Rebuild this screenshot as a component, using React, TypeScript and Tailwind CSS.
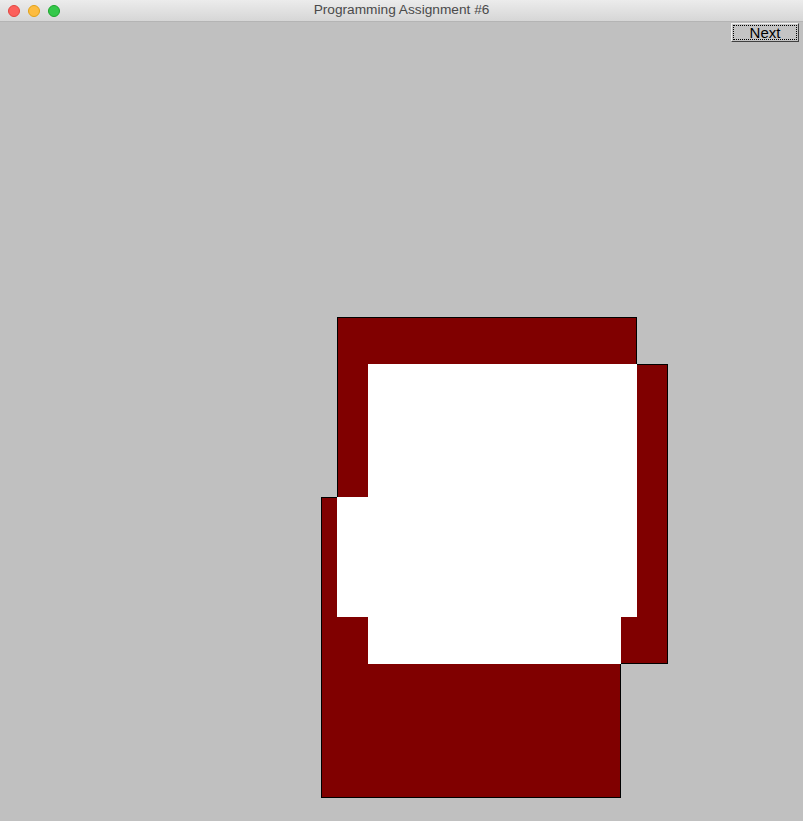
import React from "react";

type Box = { x: number; y: number; w: number; h: number };

// the three squares, in page pixels
const squares: Box[] = [
  { x: 337, y: 317, w: 300, h: 300 },
  { x: 368, y: 364, w: 300, h: 300 },
  { x: 321, y: 497, w: 300, h: 301 },
];

function overlap(a: Box, b: Box): Box | null {
  const x = Math.max(a.x, b.x);
  const y = Math.max(a.y, b.y);
  const r = Math.min(a.x + a.w, b.x + b.w);
  const btm = Math.min(a.y + a.h, b.y + b.h);
  if (r <= x || btm <= y) return null;
  return { x, y, w: r - x, h: btm - y };
}

function TitleBar() {
  return (
    <div className="relative flex h-[22px] items-center justify-center border-b border-[#b4b4b4] bg-gradient-to-b from-[#ececec] to-[#d6d6d6]">
      <div className="absolute left-[8px] top-[5px] flex gap-[8px]">
        <span className="h-[12px] w-[12px] rounded-full border border-[#e2463f] bg-[#fc605c]" />
        <span className="h-[12px] w-[12px] rounded-full border border-[#e1a116] bg-[#fdbc40]" />
        <span className="h-[12px] w-[12px] rounded-full border border-[#1ba52b] bg-[#34c84a]" />
      </div>
      <span className="text-[13.7px] text-[#4a4a4a] font-['Liberation_Sans',Arial,sans-serif]">
        Programming Assignment #6
      </span>
    </div>
  );
}

export default function App() {
  const whites: Box[] = [];
  for (let i = 0; i < squares.length; i++) {
    for (let j = i + 1; j < squares.length; j++) {
      const o = overlap(squares[i], squares[j]);
      if (o) whites.push(o);
    }
  }

  return (
    <div className="flex h-[821px] w-[803px] flex-col overflow-hidden bg-[#c0c0c0]">
      <TitleBar />

      <div className="flex justify-end pr-[4px] pt-[1px]">
        <button className="h-[19px] w-[68px] border border-t-[#f0f0f0] border-l-[#f0f0f0] border-r-[#404040] border-b-[#404040] bg-[#c4c4c4] p-[1px]">
          <div className="flex h-full w-full items-center justify-center border border-dotted border-black pb-[1px] text-[15px] leading-none text-black font-['Liberation_Sans',Arial,sans-serif]">
            Next
          </div>
        </button>
      </div>

      <svg
        width={803}
        height={779}
        viewBox="0 42 803 779"
        shapeRendering="crispEdges"
        className="block"
      >
        {squares.map((s, i) => (
          <g key={i}>
            <rect x={s.x} y={s.y} width={s.w} height={s.h} fill="#800000" />
            <rect
              x={s.x + 0.5}
              y={s.y + 0.5}
              width={s.w - 1}
              height={s.h - 1}
              fill="none"
              stroke="#000"
              strokeWidth={1}
            />
          </g>
        ))}
        {whites.map((w, i) => (
          <rect key={i} x={w.x} y={w.y} width={w.w} height={w.h} fill="#fff" />
        ))}
      </svg>
    </div>
  );
}
